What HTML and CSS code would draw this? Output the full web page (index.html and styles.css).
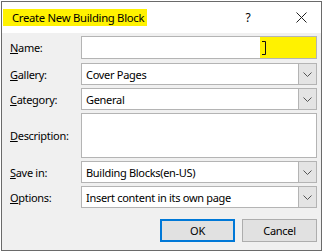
FILE: index.html
```html
<!DOCTYPE html>
<html lang="en">
<head>
    <meta charset="UTF-8">
    <title>Create New Building Block</title>
    <link rel="stylesheet" href="styles.css">
</head>
<body>
    <div class="dialog">
        <div class="titlebar">
            <span class="title">Create New Building Block</span>
            <span class="help">?</span>
            <span class="close">
                <svg width="11" height="11" viewBox="0 0 11 11"><path d="M0.5 0.5L10.5 10.5M10.5 0.5L0.5 10.5" stroke="#222" stroke-width="1"/></svg>
            </span>
        </div>

        <div class="content">
            <div class="row row-name">
                <label><u>N</u>ame:</label>
                <div class="field name-field">
                    <span class="name-text"></span>
                    <span class="marker">
                        <svg width="5" height="14" viewBox="0 0 5 14"><path d="M0 0.5H3.5V13.5H0" fill="none" stroke="#111" stroke-width="1"/></svg>
                    </span>
                </div>
            </div>

            <div class="row">
                <label><u>G</u>allery:</label>
                <div class="field select">
                    <span class="value">Cover Pages</span>
                    <span class="arrow"><svg width="9" height="5" viewBox="0 0 9 5"><path d="M0.5 0.5L4.5 4.5L8.5 0.5" fill="none" stroke="#555" stroke-width="1"/></svg></span>
                </div>
            </div>

            <div class="row">
                <label><u>C</u>ategory:</label>
                <div class="field select">
                    <span class="value">General</span>
                    <span class="arrow"><svg width="9" height="5" viewBox="0 0 9 5"><path d="M0.5 0.5L4.5 4.5L8.5 0.5" fill="none" stroke="#555" stroke-width="1"/></svg></span>
                </div>
            </div>

            <div class="row row-desc">
                <label><u>D</u>escription:</label>
                <div class="field textarea"></div>
            </div>

            <div class="row">
                <label><u>S</u>ave in:</label>
                <div class="field select">
                    <span class="value">Building Blocks(en-US)</span>
                    <span class="arrow"><svg width="9" height="5" viewBox="0 0 9 5"><path d="M0.5 0.5L4.5 4.5L8.5 0.5" fill="none" stroke="#555" stroke-width="1"/></svg></span>
                </div>
            </div>

            <div class="row">
                <label><u>O</u>ptions:</label>
                <div class="field select">
                    <span class="value">Insert content in its own page</span>
                    <span class="arrow"><svg width="9" height="5" viewBox="0 0 9 5"><path d="M0.5 0.5L4.5 4.5L8.5 0.5" fill="none" stroke="#555" stroke-width="1"/></svg></span>
                </div>
            </div>

            <div class="buttons">
                <button class="btn btn-default">OK</button>
                <button class="btn">Cancel</button>
            </div>
        </div>
    </div>
</body>
</html>
```

FILE: styles.css
```css
body {
    margin: 0;
    background-color: white;
    font-family: "Segoe UI", "Noto Sans", sans-serif;
    font-size: 11px;
    letter-spacing: -0.3px;
    color: #000;
}
.dialog {
    margin: 1px;
    width: 321px;
    height: 250px;
    box-sizing: border-box;
    border: 1px solid #6a6a6a;
    background-color: #f0f0f0;
    display: flex;
    flex-direction: column;
}
.titlebar {
    height: 31px;
    background-color: white;
    display: flex;
    align-items: center;
}
.title {
    background-color: #fff200;
    margin-left: 1px;
    padding: 0 3px 0 9px;
    height: 17px;
    line-height: 17px;
    font-size: 11.3px;
}
.help {
    margin-left: auto;
    width: 14px;
    text-align: center;
    font-size: 12px;
}
.close {
    margin-left: 41px;
    margin-right: 14px;
    display: flex;
}
.content {
    padding: 3px 4px 0 8px;
    display: flex;
    flex-direction: column;
}
.row {
    display: flex;
    align-items: center;
    margin-bottom: 3px;
}
.row-name {
    margin-bottom: 4px;
}
label {
    width: 71px;
    flex-shrink: 0;
}
.field {
    flex: 1;
    height: 22px;
    box-sizing: border-box;
    border: 1px solid #b4b4b4;
    background-color: white;
    display: flex;
    align-items: center;
}
.name-field {
    height: 23px;
}
.name-text {
    flex: 1;
}
.marker {
    width: 56px;
    align-self: stretch;
    background-color: #fff200;
    display: flex;
    align-items: center;
    padding-left: 2px;
    box-sizing: border-box;
}
.value {
    flex: 1;
    padding-left: 4px;
    white-space: nowrap;
    overflow: hidden;
}
.arrow {
    width: 17px;
    align-self: stretch;
    background-color: #e4e4e4;
    border-left: 1px solid #b4b4b4;
    display: flex;
    align-items: center;
    justify-content: center;
}
.textarea {
    height: 45px;
}
.buttons {
    display: flex;
    justify-content: flex-end;
    gap: 7px;
    margin-top: 8px;
}
.btn {
    width: 75px;
    height: 23px;
    box-sizing: border-box;
    background-color: #e1e1e1;
    border: 1px solid #adadad;
    font-family: "Segoe UI", "Noto Sans", sans-serif;
    font-size: 11px;
    letter-spacing: -0.3px;
    color: #000;
    padding: 0;
}
.btn-default {
    border: 2px solid #0078d7;
}
```
